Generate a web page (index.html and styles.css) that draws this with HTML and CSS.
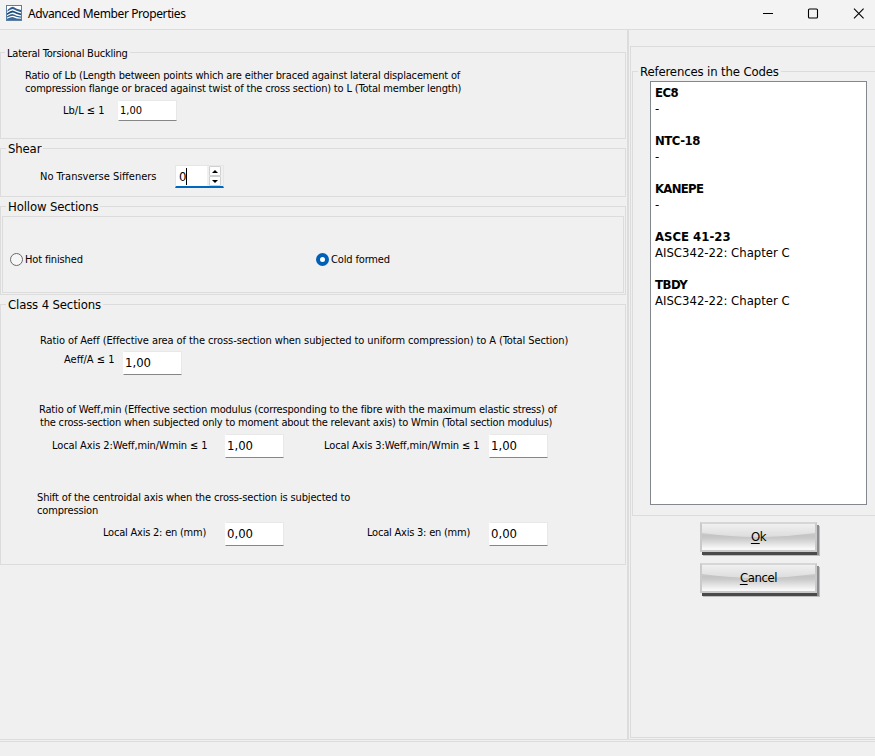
FILE: index.html
```
<!DOCTYPE html>
<html lang="en">
<head>
    <meta charset="UTF-8">
    <meta name="viewport" content="width=device-width, initial-scale=1.0">
    <title>Advanced Member Properties</title>
    <link rel="stylesheet" href="styles.css">
</head>
<body>
    <div class="title-bar">
        <svg class="app-icon" width="16" height="16" viewBox="0 0 16 16">
            <rect x="0.5" y="0.5" width="15" height="15" fill="#fff" stroke="#5d7fa3"/>
            <path d="M2 4.400Q6 .8 8 2.200T15 5v2.200Q10 5.600 8 4.400T1 6.800z" fill="#2f608f"/>
            <path d="M1 8.200Q6 4.600 8 6T15 8.400v1.800Q10 9 8 7.800T1 10z" fill="#1d4a78"/>
            <path d="M1 11.200Q6 8 8 9.400T15 11.400v1.400Q10 12 8 11T1 12.600z" fill="#2f608f"/>
            <path d="M1 13.800Q6 11.200 8 12.400T15 13.800V15H1z" fill="#3d6c9b"/>
        </svg>
        <span class="title">Advanced Member Properties</span>
        <svg width="104" height="13" viewBox="0 0 104 13">
            <path d="M1 6.500h10" stroke="#000"/>
            <rect x="46.500" y="2" width="9" height="9" rx="1" fill="none" stroke="#000" stroke-width="1.100"/>
            <path d="M92 1.700l9.600 9.600M101.600 1.700L92 11.300" stroke="#000" stroke-width="1.100"/>
        </svg>
    </div>

    <div class="content">
        <div class="left-panel">
            <fieldset class="buckling">
                <legend class="small-legend">Lateral Torsional Buckling</legend>
                <p class="lb-text">Ratio of Lb (Length between points which are either braced against lateral displacement of<br>compression flange or braced against twist of the cross section) to L (Total member length)</p>
                <div class="row lb-row">
                    <label>Lb/L ≤ 1</label>
                    <input type="text" class="small-input" value="1,00">
                </div>
            </fieldset>

            <fieldset class="shear">
                <legend>Shear</legend>
                <div class="row shear-row">
                    <label>No Transverse Siffeners</label>
                    <div class="spin">
                        <span class="spin-value">0</span>
                        <div class="spin-buttons">
                            <span><svg width="6" height="3" viewBox="0 0 6 3"><path d="M0 3l3-3 3 3z"/></svg></span>
                            <span><svg width="6" height="3" viewBox="0 0 6 3"><path d="M0 0l3 3 3-3z"/></svg></span>
                        </div>
                    </div>
                </div>
            </fieldset>

            <fieldset class="hollow">
                <legend>Hollow Sections</legend>
                <div class="radio-group">
                    <label class="radio"><span class="circle"></span>Hot finished</label>
                    <label class="radio"><span class="circle checked"></span>Cold formed</label>
                </div>
            </fieldset>

            <fieldset class="class4">
                <legend>Class 4 Sections</legend>
                <p class="aeff-text">Ratio of Aeff (Effective area of the cross-section when subjected to uniform compression) to A (Total Section)</p>
                <div class="row aeff-row">
                    <label>Aeff/A ≤ 1</label>
                    <input type="text" value="1,00">
                </div>
                <p class="weff-text">Ratio of Weff,min (Effective section modulus (corresponding to the fibre with the maximum elastic stress) of<br><span>the cross-section when subjected only to moment about the relevant axis) to Wmin (Total section modulus)</span></p>
                <div class="row weff-row">
                    <label>Local Axis 2:Weff,min/Wmin ≤ 1</label>
                    <input type="text" value="1,00">
                    <label>Local Axis 3:Weff,min/Wmin ≤ 1</label>
                    <input type="text" value="1,00">
                </div>
                <p class="shift-text">Shift of the centroidal axis when the cross-section is subjected to<br>compression</p>
                <div class="row shift-row">
                    <label>Local Axis 2: en (mm)</label>
                    <input type="text" value="0,00">
                    <label>Local Axis 3: en (mm)</label>
                    <input type="text" value="0,00">
                </div>
            </fieldset>
        </div>

        <div class="right-side">
            <div class="right-panel">
                <fieldset class="references">
                    <legend>References in the Codes</legend>
                    <div class="code-list">
                        <b>EC8</b>
                        <p>-</p>
                        <b>NTC-18</b>
                        <p>-</p>
                        <b class="tight">KANEPE</b>
                        <p>-</p>
                        <b>ASCE 41-23</b>
                        <p>AISC342-22: Chapter C</p>
                        <b>TBDY</b>
                        <p>AISC342-22: Chapter C</p>
                    </div>
                </fieldset>
                <button class="btn"><svg class="gloss" width="113" height="26" viewBox="0 0 113 26"><path d="M0 0h113v9q-56 8-113 0z"/></svg><span><u>O</u>k</span></button>
                <button class="btn"><svg class="gloss" width="113" height="26" viewBox="0 0 113 26"><path d="M0 0h113v9q-56 8-113 0z"/></svg><span><u>C</u>ancel</span></button>
            </div>
        </div>
    </div>
    <div class="status-bar"></div>
</body>
</html>
```
FILE: styles.css
```
* {
    box-sizing: border-box;
}
body {
    margin: 0;
    height: 756px;
    display: flex;
    flex-direction: column;
    overflow: hidden;
    background-color: #f0f0f0;
    color: #000;
    font-family: "DejaVu Sans Condensed", "DejaVu Sans", sans-serif;
    font-size: 11px;
    line-height: 13px;
}
p {
    margin: 0;
    white-space: nowrap;
}
.title-bar {
    height: 30px;
    flex: none;
    display: flex;
    align-items: center;
    padding: 0 9px 2px 6px;
    background-color: #f3f3f3;
    border-bottom: 1px solid #dcdcdc;
}
.app-icon {
    margin-top: -2px;
}
.title {
    flex: 1;
    margin-left: 6px;
    font-family: "Noto Sans", sans-serif;
    font-size: 12px;
    letter-spacing: -0.39px;
}
.content {
    height: 710px;
    flex: none;
    display: flex;
    border-bottom: 1px solid #dcdcdc;
}
.left-panel {
    width: 629px;
    flex: none;
    padding: 16px 1px 0 0;
    border-right: 2px solid #dcdcdc;
}
fieldset {
    margin: 0 0 3px;
    padding: 0;
    min-width: 0;
    border: 1px solid #dcdcdc;
}
legend {
    height: 13px;
    margin-left: 5px;
    padding: 0 2px;
    font-size: 13px;
    line-height: 13px;
    letter-spacing: -0.14px;
    white-space: nowrap;
}
.small-legend {
    margin-left: 4px;
    font-size: 11px;
    line-height: 15px;
    letter-spacing: -0.22px;
}
.row {
    display: flex;
    align-items: flex-start;
    white-space: nowrap;
}
input {
    width: 59px;
    height: 24px;
    padding: 0 2px 2px 1px;
    border: 1px solid #e8e8e8;
    border-left-color: #fff;
    border-bottom: 1px solid #868686;
    background-color: #fff;
    font: inherit;
    font-size: 13px;
}
.small-input {
    height: 21px;
    padding-bottom: 0;
    font-size: 11px;
}

.buckling {
    height: 93px;
}
.lb-text {
    margin: 10px 0 0 24px;
    letter-spacing: -0.18px;
}
.lb-row {
    margin: 5px 0 0 62px;
}
.lb-row label {
    width: 55px;
    line-height: 21px;
}

.shear {
    height: 55px;
}
.shear-row {
    margin: 10px 0 0 39px;
}
.shear-row label {
    width: 135px;
    line-height: 23px;
}
.spin {
    width: 49px;
    height: 23px;
    display: flex;
    background-color: #fff;
    border: 1px solid #e6e6e6;
    border-bottom: 2px solid #0067c0;
}
.spin-value {
    width: 9px;
    height: 17px;
    margin: 2px 0 0 2px;
    padding-left: 1px;
    border-right: 1px solid #000;
    font-size: 13px;
    line-height: 17px;
}
.spin-buttons {
    width: 16px;
    margin-left: auto;
    padding: 0 2px 0 0;
    display: flex;
    flex-direction: column;
    background-color: #f0f0f0;
}
.spin-buttons span {
    height: 10px;
    margin-left: 2px;
    display: flex;
    align-items: center;
    justify-content: center;
    background-color: #fdfdfd;
    border: 1px solid #d0d0d0;
    border-radius: 1px;
}

.hollow {
    height: 95px;
}
.radio-group {
    height: 77px;
    margin: 3px 1px 0;
    display: flex;
    align-items: center;
    border: 1px solid #dcdcdc;
    padding: 10px 0 0 7px;
}
.radio {
    width: 306px;
    display: flex;
    align-items: center;
    gap: 2px;
    letter-spacing: -0.15px;
}
.circle {
    width: 13px;
    height: 13px;
    border: 1px solid #6a6a6a;
    border-radius: 50%;
    background-color: #f6f6f6;
}
.circle.checked {
    border: 4px solid #005fb8;
    background-color: #fff;
}

.class4 {
    height: 267px;
}
.aeff-text {
    margin: 23px 0 0 39px;
    letter-spacing: -0.095px;
}
.aeff-row {
    margin: 4px 0 0 63px;
}
.aeff-row label {
    width: 59px;
    line-height: 17px;
}
.weff-text {
    margin: 28px 0 0 38px;
    letter-spacing: -0.17px;
}
.weff-text span {
    margin-left: 1px;
    letter-spacing: -0.19px;
}
.weff-row {
    margin: 5px 0 0 51px;
    letter-spacing: -0.11px;
}
.weff-row label {
    width: 173px;
    line-height: 23px;
}
.weff-row label:nth-of-type(2) {
    width: 165px;
}
.weff-row input {
    margin-right: 40px;
}
.shift-text {
    margin: 33px 0 0 36px;
    letter-spacing: -0.145px;
}
.shift-row {
    margin: 5px 0 0 102px;
    letter-spacing: -0.22px;
}
.shift-row label {
    width: 122px;
    line-height: 21px;
}
.shift-row input {
    margin-right: 83px;
}
/* no letter spacing inside the fields */
.row input {
    letter-spacing: 0;
}
.weff-row label, .shift-row label {
    flex: none;
}

.right-side {
    flex: 1;
    padding: 16px 0 1px 1px;
    overflow: hidden;
}
.right-panel {
    width: 260px;
    height: 692px;
    padding: 18px 0 0 1px;
    border: 1px solid #dcdcdc;
}
.references {
    height: 451px;
    margin: 0 0 6px;
}
.code-list {
    width: 217px;
    height: 424px;
    margin: 3px 0 0 17px;
    padding: 3px 4px;
    border: 1px solid #828790;
    background-color: #fff;
    font-size: 13px;
    line-height: 16px;
}
.code-list b {
    display: block;
}
.code-list .tight {
    letter-spacing: -0.7px;
}
.code-list b:not(.tight):not(:nth-of-type(4)) {
    letter-spacing: -0.5px;
}
.code-list p {
    margin-bottom: 16px;
}
.btn {
    position: relative;
    width: 117px;
    height: 30px;
    display: block;
    margin: 0 0 11px 68px;
    padding: 0 0 2px;
    border: 2px solid #cacacd;
    border-top-color: #d6d6d8;
    background: linear-gradient(#e4e4e4 0%, #c4c4c4 45%, #cacaca 55%, #f8f8f8 95%);
    box-shadow: 1px 4px 0 -1px #4a4a4a, 2px 3px 0 #8c8c8c, 3px 4px 0 #bdbdbd;
    font: inherit;
    font-size: 13px;
    letter-spacing: -0.4px;
}
.btn span {
    position: relative;
}
.btn u {
    text-underline-offset: 2px;
}
.gloss {
    position: absolute;
    left: 0;
    top: 0;
    fill: rgba(255, 255, 255, 0.45);
}
.status-bar {
    height: 2px;
    flex: none;
    border-bottom: 1px solid #dcdcdc;
}
```
